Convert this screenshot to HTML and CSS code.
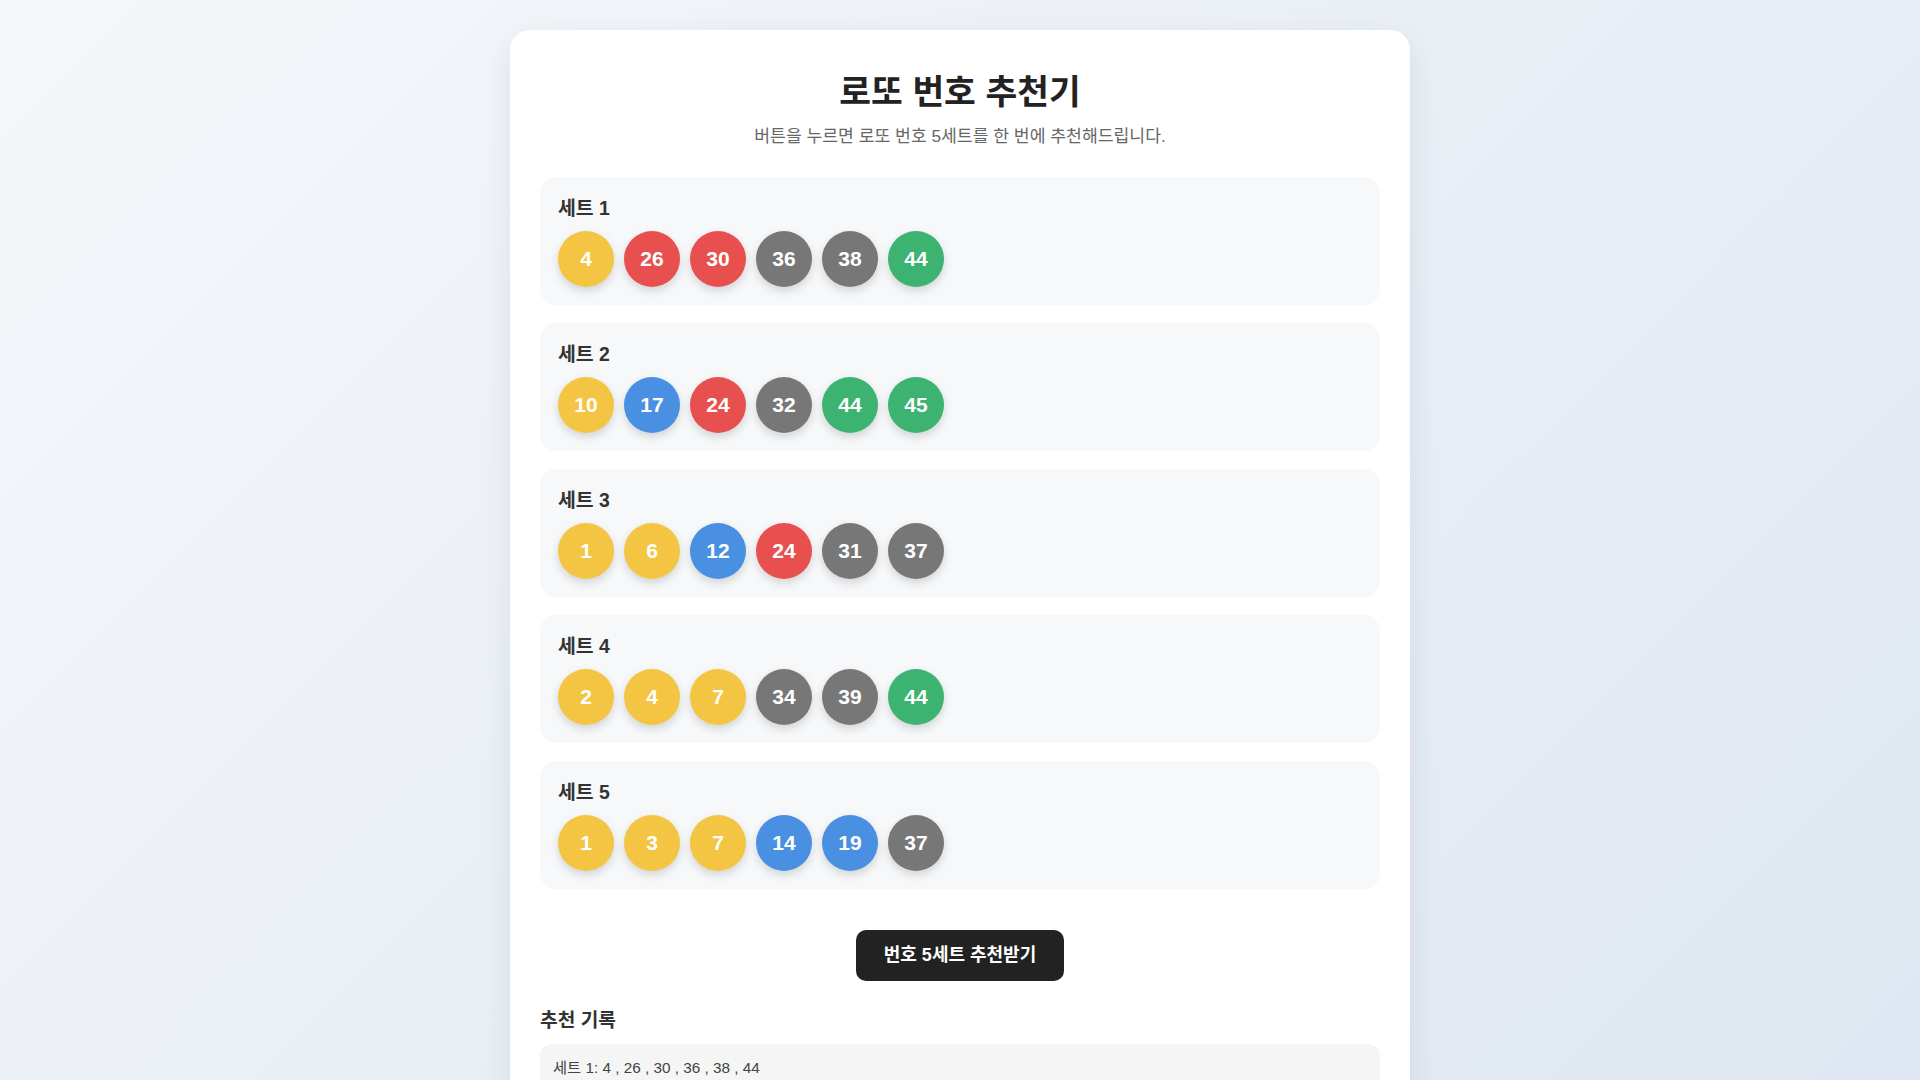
FILE: index.html
```html
<!DOCTYPE html>
<html lang="ko">
<head>
    <meta charset="UTF-8">
    <meta name="viewport" content="width=device-width, initial-scale=1.0">
    <title>로또 번호 추천기</title>
    <link rel="stylesheet" href="styles.css">
</head>
<body>
    <div class="lotto-container">
        <h1 class="lotto-title">로또 번호 추천기</h1>
        <p class="lotto-desc">버튼을 누르면 로또 번호 5세트를 한 번에 추천해드립니다.</p>

        <div class="set-list">
            <div class="set-box">
                <div class="set-label">세트 1</div>
                <div class="ball-row">
                    <span class="ball yellow">4</span>
                    <span class="ball red">26</span>
                    <span class="ball red">30</span>
                    <span class="ball gray">36</span>
                    <span class="ball gray">38</span>
                    <span class="ball green">44</span>
                </div>
            </div>
            <div class="set-box">
                <div class="set-label">세트 2</div>
                <div class="ball-row">
                    <span class="ball yellow">10</span>
                    <span class="ball blue">17</span>
                    <span class="ball red">24</span>
                    <span class="ball gray">32</span>
                    <span class="ball green">44</span>
                    <span class="ball green">45</span>
                </div>
            </div>
            <div class="set-box">
                <div class="set-label">세트 3</div>
                <div class="ball-row">
                    <span class="ball yellow">1</span>
                    <span class="ball yellow">6</span>
                    <span class="ball blue">12</span>
                    <span class="ball red">24</span>
                    <span class="ball gray">31</span>
                    <span class="ball gray">37</span>
                </div>
            </div>
            <div class="set-box">
                <div class="set-label">세트 4</div>
                <div class="ball-row">
                    <span class="ball yellow">2</span>
                    <span class="ball yellow">4</span>
                    <span class="ball yellow">7</span>
                    <span class="ball gray">34</span>
                    <span class="ball gray">39</span>
                    <span class="ball green">44</span>
                </div>
            </div>
            <div class="set-box">
                <div class="set-label">세트 5</div>
                <div class="ball-row">
                    <span class="ball yellow">1</span>
                    <span class="ball yellow">3</span>
                    <span class="ball yellow">7</span>
                    <span class="ball blue">14</span>
                    <span class="ball blue">19</span>
                    <span class="ball gray">37</span>
                </div>
            </div>
        </div>

        <div class="btn-wrap">
            <button class="draw-button">번호 5세트 추천받기</button>
        </div>

        <h2 class="history-title">추천 기록</h2>
        <div class="history-box">
            <div class="history-item">세트 1: 4 , 26 , 30 , 36 , 38 , 44</div>
            <div class="history-item">세트 2: 10 , 17 , 24 , 32 , 44 , 45</div>
            <div class="history-item">세트 3: 1 , 6 , 12 , 24 , 31 , 37</div>
            <div class="history-item">세트 4: 2 , 4 , 7 , 34 , 39 , 44</div>
            <div class="history-item">세트 5: 1 , 3 , 7 , 14 , 19 , 37</div>
        </div>
    </div>
</body>
</html>
```

FILE: styles.css
```css
body {
    font-family: "Liberation Sans", "Noto Sans CJK KR", sans-serif;
    background: linear-gradient(135deg, #f5f7fa 0%, #dde6f1 100%);
    margin: 0;
    padding: 30px 0 40px;
    min-height: 100vh;
    box-sizing: border-box;
    color: #222;
}
.lotto-container {
    width: 900px;
    box-sizing: border-box;
    margin: 0 auto;
    background-color: #fff;
    border-radius: 20px;
    box-shadow: 0 10px 30px rgba(40, 60, 100, 0.10);
    padding: 43px 30px 30px;
}
.lotto-title {
    margin: 0;
    text-align: center;
    font-size: 34.5px;
    line-height: 38px;
    font-weight: 700;
    color: #222;
}
.lotto-desc {
    margin: 13px 0 29px;
    text-align: center;
    font-size: 17.2px;
    line-height: 24px;
    color: #666;
}
.set-list {
    display: flex;
    flex-direction: column;
    gap: 18px;
}
.set-box {
    background-color: #f7f8fa;
    border-radius: 16px;
    padding: 18px;
}
.set-label {
    font-size: 19.4px;
    line-height: 26px;
    font-weight: 700;
    color: #333;
    margin-bottom: 10px;
}
.ball-row {
    display: flex;
    gap: 10px;
}
.ball {
    width: 56px;
    height: 56px;
    border-radius: 50%;
    display: flex;
    align-items: center;
    justify-content: center;
    color: #fff;
    font-size: 21px;
    font-weight: 700;
    box-shadow: 0 4px 10px rgba(0, 0, 0, 0.15);
}
.yellow { background-color: #f4c542; }
.blue { background-color: #4a90e2; }
.red { background-color: #e85050; }
.gray { background-color: #777777; }
.green { background-color: #3cb371; }
.btn-wrap {
    display: flex;
    justify-content: center;
    margin-top: 41px;
}
.draw-button {
    font-family: inherit;
    background-color: #222;
    color: #fff;
    border: none;
    border-radius: 10px;
    padding: 14px 28px;
    font-size: 18px;
    line-height: 23px;
    font-weight: 700;
    cursor: pointer;
}
.draw-button:hover {
    background-color: #000;
}
.history-title {
    margin: 27px 0 10px;
    font-size: 19.2px;
    line-height: 26px;
    font-weight: 700;
    color: #333;
}
.history-box {
    background-color: #f5f5f5;
    border-radius: 12px;
    padding: 14px 13px;
}
.history-item {
    font-size: 15.3px;
    line-height: 20px;
    color: #444;
    margin-bottom: 6px;
}
.history-item:last-child {
    margin-bottom: 0;
}
```
